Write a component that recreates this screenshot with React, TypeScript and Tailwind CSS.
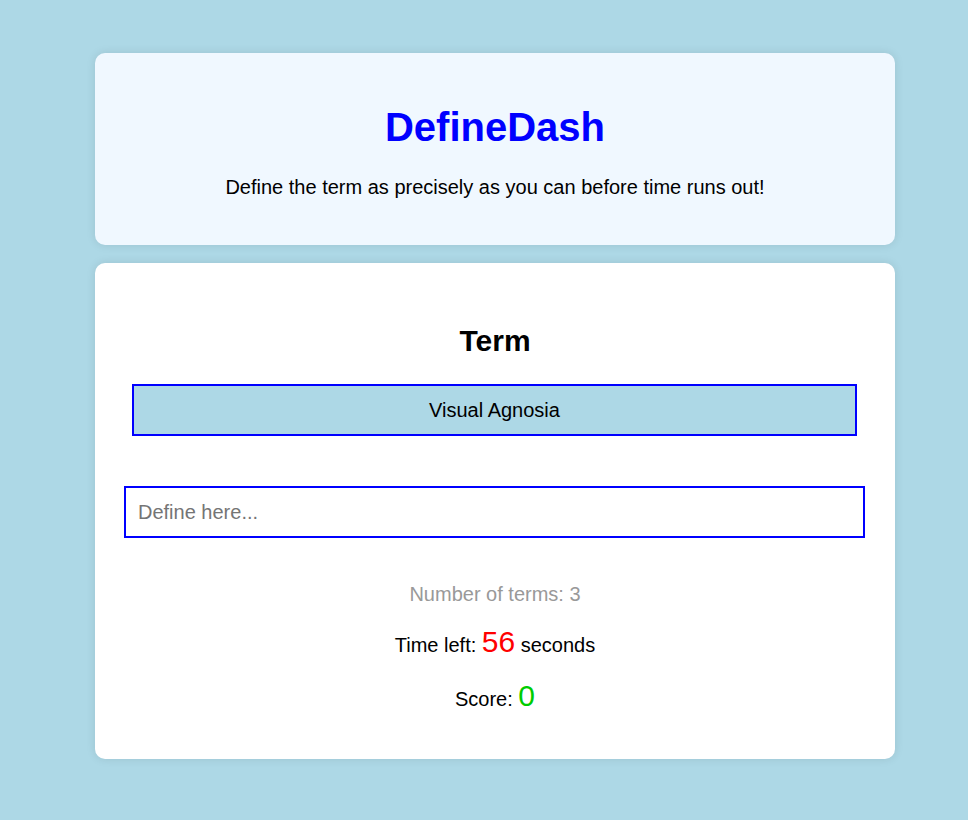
import React from "react";

export default function App() {
  return (
    <div className="min-h-screen w-full bg-[#add8e6] pt-[53px] pb-[61px]" style={{ fontFamily: '"Liberation Sans", Arial, sans-serif' }}>
      <div className="ml-[95px] w-[800px]">
        <div className="rounded-[10px] bg-[#f0f8ff] shadow-[0_0_10px_rgba(0,0,0,0.1)] pt-[51px] pb-[46px] text-center">
          <h1 className="text-[40px] leading-[46px] font-bold text-[#0000ff]">DefineDash</h1>
          <p className="mt-[26px] text-[20px] leading-[23px] text-black">Define the term as precisely as you can before time runs out!</p>
        </div>
        <div className="mt-[18px] rounded-[10px] bg-white shadow-[0_0_10px_rgba(0,0,0,0.1)] pt-[61px] pb-[43px] text-center">
          <h2 className="text-[30px] leading-[34px] font-bold text-black">Term</h2>
          <div className="ml-[37px] mr-[38px] mt-[26px] h-[52px] border-2 border-[#0000ff] bg-[#add8e6] flex items-center justify-center text-[20px] text-black">
            Visual Agnosia
          </div>
          <div className="ml-[29px] mr-[30px] mt-[50px]">
            <input
              type="text"
              placeholder="Define here..."
              className="block w-full h-[52px] border-2 border-[#0000ff] px-[12px] text-[20px] text-black placeholder:text-[#757575] outline-none bg-white"
              style={{ fontFamily: '"Liberation Sans", Arial, sans-serif' }}
            />
          </div>
          <p className="mt-[45px] text-[20px] leading-[23px] text-[#999999]">Number of terms: 3</p>
          <p className="mt-[19px] text-[20px] leading-[34px] text-black">
            Time left: <span className="text-[30px] text-[#ff0000]">56</span> seconds
          </p>
          <p className="mt-[17px] text-[20px] leading-[34px] text-black">
            Score: <span className="text-[30px] text-[#00cc00]">0</span>
          </p>
        </div>
      </div>
    </div>
  );
}
